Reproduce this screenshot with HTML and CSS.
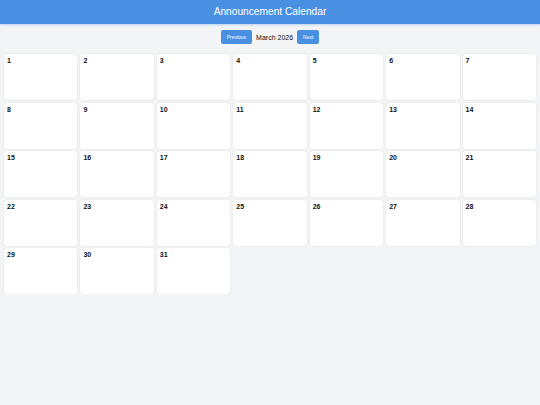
FILE: index.html
```html
<!DOCTYPE html>
<html>
<head>
<meta charset="utf-8">
<link rel="stylesheet" href="styles.css">
</head>
<body>
<header class="topbar">Announcement Calendar</header>
<nav class="nav">
  <button class="btn">Previous</button>
  <span class="month">March 2026</span>
  <button class="btn">Next</button>
</nav>
<main class="grid">
  <div class="day"><span class="num">1</span></div>
  <div class="day"><span class="num">2</span></div>
  <div class="day"><span class="num">3</span></div>
  <div class="day"><span class="num">4</span></div>
  <div class="day"><span class="num">5</span></div>
  <div class="day"><span class="num">6</span></div>
  <div class="day"><span class="num">7</span></div>
  <div class="day"><span class="num">8</span></div>
  <div class="day"><span class="num">9</span></div>
  <div class="day"><span class="num">10</span></div>
  <div class="day"><span class="num">11</span></div>
  <div class="day"><span class="num">12</span></div>
  <div class="day"><span class="num">13</span></div>
  <div class="day"><span class="num">14</span></div>
  <div class="day"><span class="num">15</span></div>
  <div class="day"><span class="num">16</span></div>
  <div class="day"><span class="num">17</span></div>
  <div class="day"><span class="num">18</span></div>
  <div class="day"><span class="num">19</span></div>
  <div class="day"><span class="num">20</span></div>
  <div class="day"><span class="num">21</span></div>
  <div class="day"><span class="num">22</span></div>
  <div class="day"><span class="num">23</span></div>
  <div class="day"><span class="num">24</span></div>
  <div class="day"><span class="num">25</span></div>
  <div class="day"><span class="num">26</span></div>
  <div class="day"><span class="num">27</span></div>
  <div class="day"><span class="num">28</span></div>
  <div class="day"><span class="num">29</span></div>
  <div class="day"><span class="num">30</span></div>
  <div class="day"><span class="num">31</span></div>
</main>
</body>
</html>
```
FILE: styles.css
```css
html, body {
  margin: 0;
  padding: 0;
  background: #f3f4f6;
  font-family: "Liberation Sans", Arial, sans-serif;
}
.topbar {
  height: 24px;
  background: #4a90e2;
  color: #ffffff;
  font-size: 10.2px;
  line-height: 24px;
  text-align: center;
  box-shadow: 0 1px 2px rgba(74, 144, 226, 0.35);
}
.nav {
  display: flex;
  justify-content: center;
  align-items: center;
  gap: 4px;
  margin-top: 6px;
  height: 14px;
}
.btn {
  height: 14px;
  padding: 0 6px;
  border: none;
  border-radius: 2px;
  background: #4a90e2;
  color: #ffffff;
  font-family: "Liberation Sans", Arial, sans-serif;
  font-size: 5px;
  line-height: 14px;
}
.month {
  font-size: 7px;
  color: #111;
}
.grid {
  display: grid;
  grid-template-columns: repeat(7, 1fr);
  grid-auto-rows: 46px;
  column-gap: 3px;
  row-gap: 2.5px;
  padding: 10px 4px 0 4px;
}
.day {
  background: #ffffff;
  border-radius: 3px;
  box-shadow: 0 0 1.5px rgba(0, 0, 0, 0.12);
  padding: 3px 3px;
  font-size: 7px;
  line-height: 8px;
}
.num {
  font-weight: bold;
  color: #111;
}
```
